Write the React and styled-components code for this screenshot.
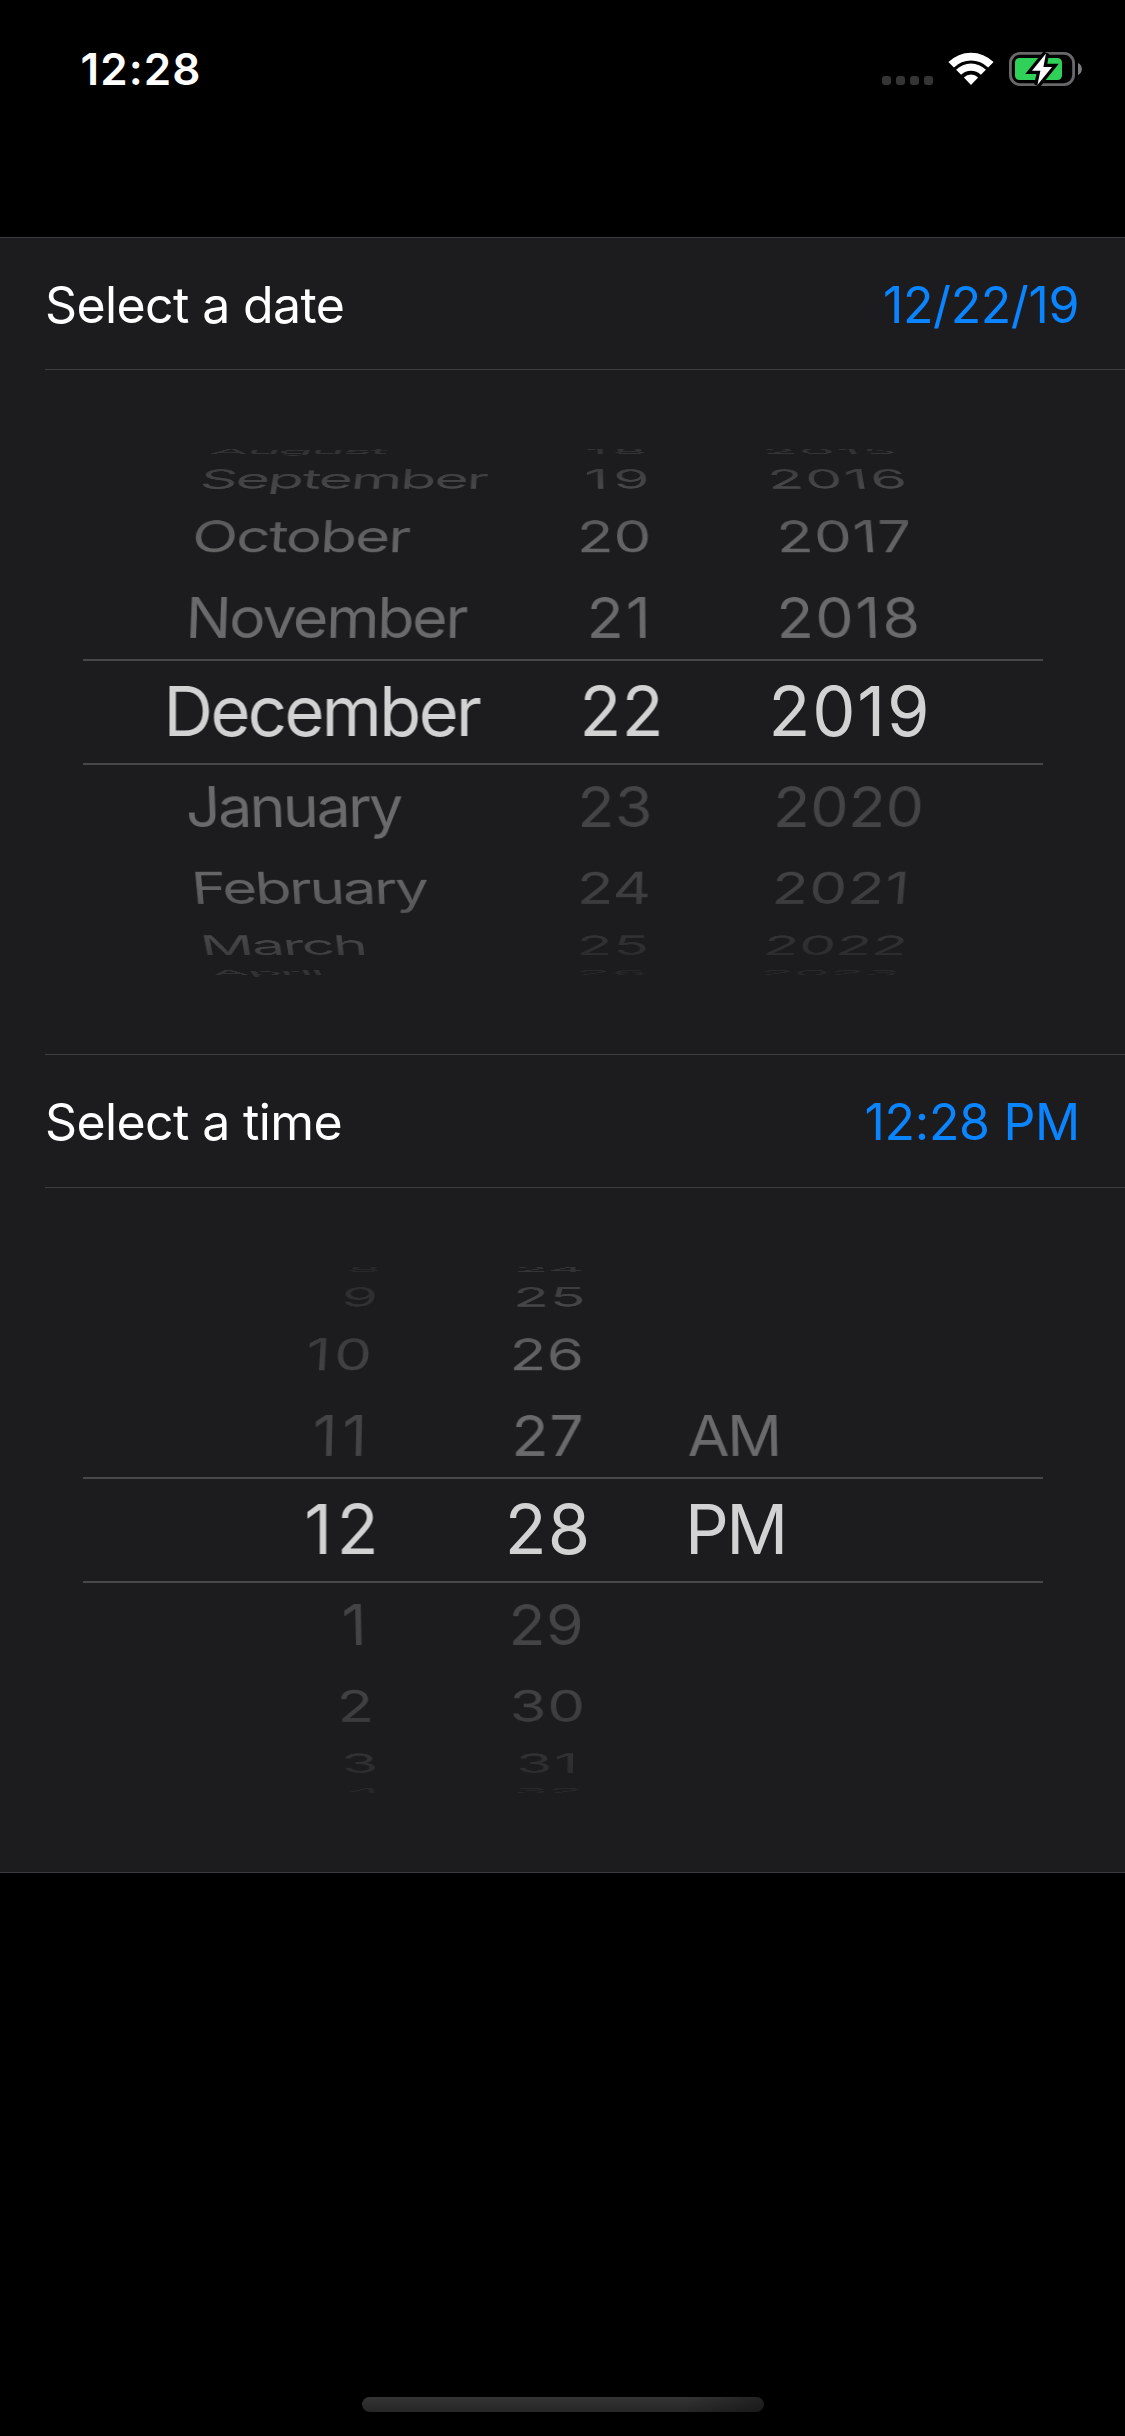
import React from 'react';
import styled, { createGlobalStyle } from 'styled-components';

const STEP_DEG = 19.55;
const RADIUS = 284;

const GlobalStyle = createGlobalStyle`
  * { box-sizing: border-box; }
  body {
    margin: 0;
    background: #000;
    color: #fff;
    font-family: Inter, "Liberation Sans", sans-serif;
  }
`;

const Screen = styled.main`
  display: flex;
  flex-direction: column;
  width: 1125px;
  height: 2436px;
  overflow: hidden;
  background: #000;
`;

const StatusBar = styled.header`
  display: flex;
  align-items: flex-start;
  justify-content: space-between;
  height: 237px;
  padding: 52px 43px 0 80.5px;
`;

const Clock = styled.time`
  font-size: 44px;
  font-weight: 600;
  line-height: 34px;
  letter-spacing: 1.1px;
`;

const StatusIcons = styled.div`
  display: flex;
  align-items: flex-end;
  height: 34px;
`;

const SignalDots = styled.div`
  display: flex;
  gap: 5px;
  margin: 0 15px 1px 0;
`;

const SignalDot = styled.i`
  width: 9px;
  height: 9px;
  border-radius: 3px;
  background: #353535;
`;

const WifiGlyph = styled.svg`
  display: block;
  width: 46px;
  height: 34px;
  margin-right: 15px;
  fill: #fff;
`;

const BatteryGlyph = styled.svg`
  display: block;
  width: 73px;
  height: 34px;
  overflow: visible;
`;

const Form = styled.section`
  border-top: 1px solid #3d3d41;
  border-bottom: 1px solid #3d3d41;
  background: #1c1c1e;
`;

const FieldRow = styled.div`
  display: flex;
  align-items: center;
  justify-content: space-between;
  height: ${(p) => p.$height}px;
  margin-left: 45px;
  padding: 2px 45px 0 0;
  border-bottom: 1px solid #3d3d41;
  font-size: 50px;
`;

const FieldLabel = styled.span`
  letter-spacing: -0.62px;
`;

const FieldValue = styled.span`
  color: #0a84ff;
  letter-spacing: ${(p) => p.$tracking}px;
  margin-right: ${(p) => p.$inset || 0}px;
`;

const Picker = styled.div`
  display: grid;
  height: 684px;
  align-items: center;
  > * { grid-area: 1 / 1; }
`;

const Divider = styled.hr`
  height: 1px;
  margin: 0 0 0 45px;
  border: 0;
  background: #3d3d41;
`;

const SelectionBand = styled.div`
  width: 960px;
  height: 106px;
  margin-left: 83px;
  border-top: 2px solid #48484a;
  border-bottom: 2px solid #48484a;
`;

const Drum = styled.div`
  display: flex;
  align-items: center;
  height: 560px;
  padding-left: 184px;
  perspective: 3400px;
  perspective-origin: 562.5px 50%;
  mask-image: linear-gradient(
    transparent 0,
    rgba(0, 0, 0, 0.27) 16px,
    rgba(0, 0, 0, 0.5) 48px,
    rgba(0, 0, 0, 0.7) 76px,
    rgba(0, 0, 0, 0.9) 106px,
    #000 150px,
    #000 410px,
    rgba(0, 0, 0, 0.9) 454px,
    rgba(0, 0, 0, 0.7) 484px,
    rgba(0, 0, 0, 0.5) 512px,
    rgba(0, 0, 0, 0.27) 544px,
    transparent 560px
  );
`;

const Wheel = styled.div`
  display: grid;
  flex: none;
  width: ${(p) => p.$width}px;
  height: 96px;
  margin-left: ${(p) => p.$gap || 0}px;
  transform: translateZ(-${RADIUS}px);
  transform-style: preserve-3d;
`;

const Item = styled.div`
  grid-area: 1 / 1;
  text-align: ${(p) => p.$align};
  line-height: 96px;
  white-space: nowrap;
  backface-visibility: hidden;
  font-size: ${(p) => (p.$selected ? 68.6 : 61)}px;
  color: ${(p) => (p.$selected ? '#d2d2d3' : p.$muted ? '#444446' : '#6a6a6c')};
  transform: rotateX(${(p) => p.$turn * STEP_DEG}deg)
    translate3d(${(p) => p.$shift}px, 0, ${RADIUS}px);
`;

const ItemText = styled.span`
  letter-spacing: ${(p) => p.$tracking}px;
  margin-right: ${(p) => -p.$tracking}px;
`;

/* Each wheel entry: [turn from centre, text, tracking, muted, horizontal nudge] */
const DATE_WHEELS = [
  {
    width: 376, align: 'left',
    items: [
      [4, 'August', -2.7, false, 3], [3, 'September', -2.05, false, 2],
      [2, 'October', -1.75, false, 1.5], [1, 'November', -2.2],
      [0, 'December', -2.6, false, -20.5],
      [-1, 'January', -2.5], [-2, 'February', -2.3, false, 0.5],
      [-3, 'March', -2.1, false, 2], [-4, 'April', -2.8, false, 3],
    ],
  },
  {
    width: 93, align: 'right',
    items: [
      [4, '18', 4.5], [3, '19', 5], [2, '20', 0], [1, '21', 2.3, false, -2],
      [0, '22', 0.3, false, 10.5],
      [-1, '23', 0.5, true], [-2, '24', 0, true], [-3, '25', 1, true, -0.5], [-4, '26', 1, true],
    ],
  },
  {
    width: 300, gap: 46, align: 'center',
    items: [
      [4, '2015', 2, false, -2], [3, '2016', 2.1, false, -1],
      [2, '2017', 1, false, 0.5], [1, '2018', 1.9, false, 0.5],
      [0, '2019', 1.8],
      [-1, '2020', 0, true, 1], [-2, '2021', 0.7, true, -3],
      [-3, '2022', 0, true, -2.5], [-4, '2023', -0.3, true, -2],
    ],
  },
];

const TIME_WHEELS = [
  {
    width: 185, align: 'right',
    items: [
      [4, '8', 0, true, 1], [3, '9', 0, true, 1.5], [2, '10', 3.8, true, -0.5], [1, '11', 5, true, -3],
      [0, '12', 4.4, false, 9.5],
      [-1, '1', 0, true, -3.5], [-2, '2', 0, true, 1], [-3, '3', 0, true, 1.5], [-4, '4', 0, true, 2],
    ],
  },
  {
    width: 200, gap: 78.5, align: 'center',
    items: [
      [4, '24', 0], [3, '25', 1, false, 1], [2, '26', 0.6, false, -1.5], [1, '27', 1, false, -0.5],
      [0, '28', 1],
      [-1, '29', 0.5, true, -2], [-2, '30', 1, true, -1], [-3, '31', 2, true, -1.5], [-4, '32', 0, true, -1],
    ],
  },
  {
    width: 200, gap: 40.5, align: 'left',
    items: [[1, 'AM', -2], [0, 'PM', -2.6, false, -3]],
  },
];

const HomeArea = styled.footer`
  display: flex;
  flex: 1;
  align-items: flex-end;
  padding: 0 0 24px 362px;
`;

const HomeIndicator = styled.div`
  width: 402px;
  height: 15px;
  border-radius: 8px;
  background:
    linear-gradient(100deg, transparent 80%, rgba(0, 0, 0, 0.35) 100%),
    linear-gradient(#343434, #262626);
`;

function WifiIcon() {
  return (
    <WifiGlyph viewBox="948 52 46 34">
      <path d="M948.4 62.1A32 32 0 0 1 993.6 62.1L988.1 67.6A24.2 24.2 0 0 0 953.9 67.6Z" />
      <path d="M956.1 69.7A21.2 21.2 0 0 1 985.9 69.7L980.9 74.8A14 14 0 0 0 961.1 74.8Z" />
      <path d="M963.9 77.5A10.2 10.2 0 0 1 978.1 77.5L971 85Z" />
    </WifiGlyph>
  );
}

function BatteryIcon() {
  return (
    <BatteryGlyph viewBox="1009 52 73 34">
      <rect x="1010.4" y="53.4" width="63.2" height="31.2" rx="9.6" fill="none" stroke="#69696b" strokeWidth="2.8" />
      <path d="M1078 63C1083.2 65 1083.2 73 1078 75Z" fill="#7c7c7e" />
      <rect x="1015" y="58" width="47" height="22" rx="4.5" fill="#30d158" />
      <path
        d="M1046 53.5L1032 70.8H1040.4L1037.4 85L1052 67H1043.4Z"
        fill="#fff"
        stroke="#000"
        strokeWidth="6.5"
        strokeMiterlimit="3"
        paintOrder="stroke"
      />
    </BatteryGlyph>
  );
}

function WheelPicker({ wheels }) {
  return (
    <Picker>
      <SelectionBand />
      <Drum>
        {wheels.map((wheel, i) => (
          <Wheel key={i} $width={wheel.width} $gap={wheel.gap}>
            {wheel.items.map(([turn, text, tracking, muted = false, nudge = 0]) => (
              <Item
                key={text}
                $align={wheel.align}
                $turn={turn}
                $muted={muted}
                $selected={turn === 0}
                $shift={nudge}
              >
                <ItemText $tracking={tracking}>{text}</ItemText>
              </Item>
            ))}
          </Wheel>
        ))}
      </Drum>
    </Picker>
  );
}

export default function App() {
  return (
    <>
      <GlobalStyle />
      <Screen>
        <StatusBar>
          <Clock>12:28</Clock>
          <StatusIcons>
            <SignalDots>
              <SignalDot />
              <SignalDot />
              <SignalDot />
              <SignalDot />
            </SignalDots>
            <WifiIcon />
            <BatteryIcon />
          </StatusIcons>
        </StatusBar>
        <Form>
          <FieldRow $height={132}>
            <FieldLabel>Select a date</FieldLabel>
            <FieldValue $tracking={-0.4} $inset={1}>12/22/19</FieldValue>
          </FieldRow>
          <WheelPicker wheels={DATE_WHEELS} />
          <Divider />
          <FieldRow $height={133}>
            <FieldLabel>Select a time</FieldLabel>
            <FieldValue $tracking={-0.3}>12:28 PM</FieldValue>
          </FieldRow>
          <WheelPicker wheels={TIME_WHEELS} />
        </Form>
        <HomeArea>
          <HomeIndicator />
        </HomeArea>
      </Screen>
    </>
  );
}
